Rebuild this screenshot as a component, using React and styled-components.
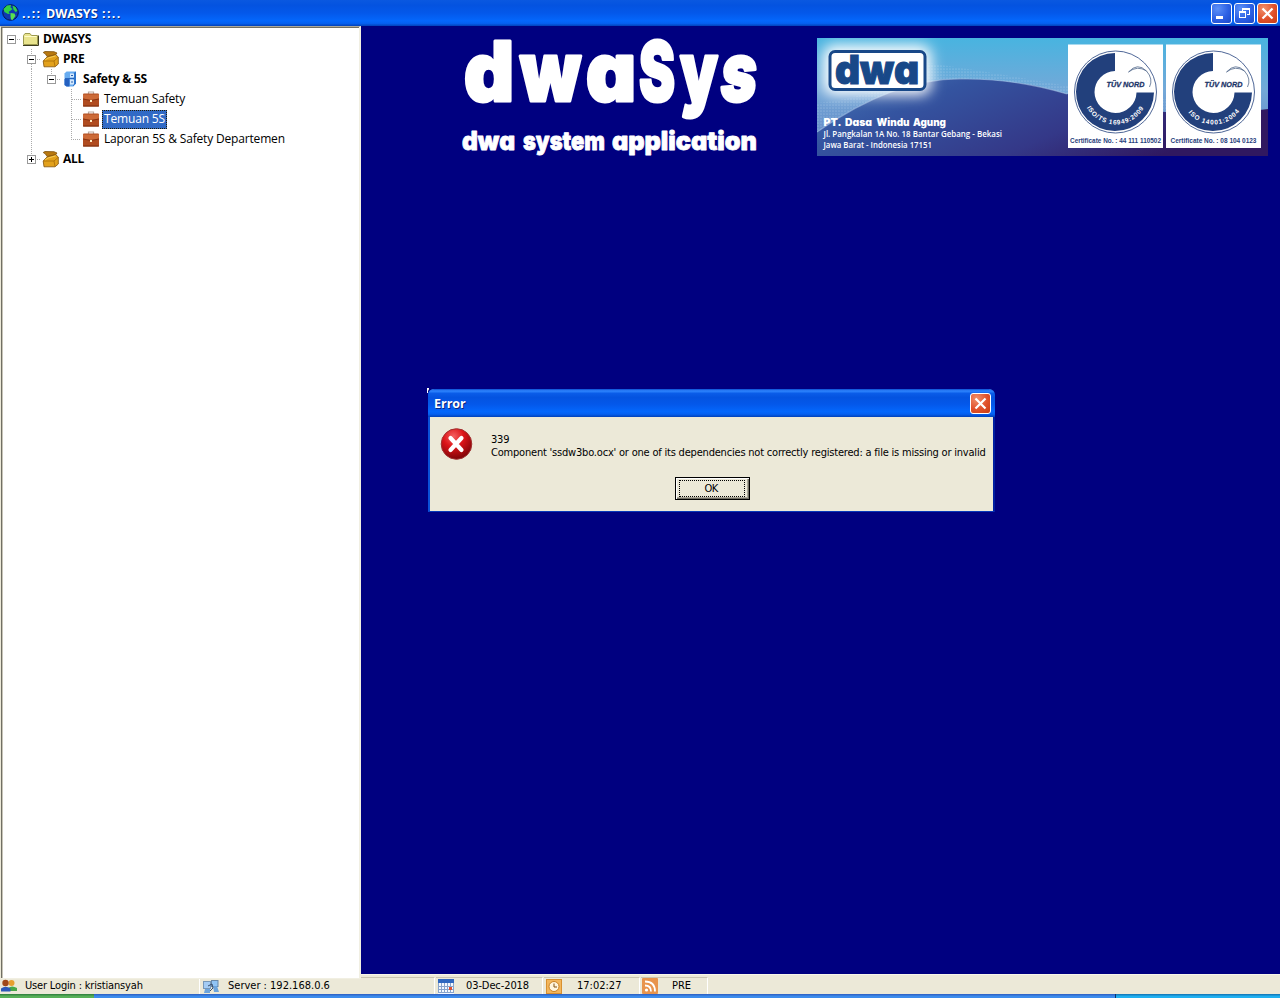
import React from 'react';
import styled, { createGlobalStyle, css } from 'styled-components';

const GlobalStyle = createGlobalStyle`
  * { box-sizing: border-box; }
  body { margin: 0; overflow: hidden; background: #000080; }
  svg { display: block; flex: none; }
`;

const tahoma = css`
  font-family: 'DejaVu Sans Condensed', 'DejaVu Sans', sans-serif;
  font-stretch: condensed;
`;
const trebuchet = css`
  font-family: 'Open Sans', 'Noto Sans', sans-serif;
`;

const Screen = styled.div`
  width: 1280px;
  height: 998px;
  display: flex;
  flex-direction: column;
  overflow: hidden;
  position: relative;
  background: #ece9d8;
`;

const TitleBar = styled.header`
  height: 26px;
  flex: none;
  display: flex;
  align-items: center;
  padding: 0 2px;
  background: linear-gradient(#0a58e0 0, #0453e0 20%, #0458ea 50%, #0467fc 80%, #0560f0 90%, #0241b8 100%);
`;

const TitleText = styled.h1`
  ${trebuchet}
  flex: 1;
  margin: 0 0 0 ${(p) => p.$indent || 4}px;
  padding-top: ${(p) => p.$drop || 0}px;
  font-size: 12.5px;
  line-height: 26px;
  font-weight: 700;
  color: #fff;
  text-shadow: 1px 1px 0 #0a2a80;
  white-space: pre;
`;

const Dots = styled.span`
  letter-spacing: 1.3px;
`;

const Controls = styled.div`
  display: flex;
  gap: 2px;
`;

const ControlButton = styled.button`
  width: 21px;
  height: 21px;
  padding: 0;
  display: flex;
  align-items: center;
  justify-content: center;
  border: 1px solid #fff;
  border-radius: 3px;
  background: ${(p) =>
    p.$close
      ? 'radial-gradient(circle at 30% 25%, #f0906c, #e0502a 55%, #c83c14)'
      : 'radial-gradient(circle at 30% 25%, #5c90f8, #2c60e4 55%, #1a48c8)'};
`;

const Workspace = styled.main`
  height: 948px;
  flex: none;
  display: grid;
  grid-template-columns: 361px 1fr;
`;

const Sidebar = styled.nav`
  position: relative;
  z-index: 1;
  height: 953px;
  padding: 2px 0 0 0;
  background: #fff;
  border-style: solid;
  border-width: 1px 2px 1px 1px;
  border-color: #aca899 #f1efe2 #f1efe2 #ece9d8;
  box-shadow: inset 1px 1px 0 #716f64, inset 2px 0 0 #c8c5b8;
`;

const TreeRow = styled.div`
  height: 20px;
  display: flex;
  align-items: center;
`;

const Guide = styled.span`
  width: 20px;
  height: 20px;
  flex: none;
`;

const NodeLabel = styled.span`
  ${trebuchet}
  height: 19px;
  line-height: 18px;
  padding: 0 2px;
  margin-left: ${(p) => (p.$bold ? 1 : 2)}px;
  white-space: nowrap;
  font-size: 12px;
  font-weight: ${(p) => (p.$bold ? 700 : 400)};
  letter-spacing: ${(p) => (p.$bold ? -0.22 : -0.17)}px;
  color: ${(p) => (p.$selected ? '#fff' : '#000')};
  background: ${(p) => (p.$selected ? '#316ac5' : 'transparent')};
  outline: ${(p) => (p.$selected ? '1px dotted #221a00' : 'none')};
  outline-offset: -1px;
`;

const Canvas = styled.section`
  background: #000080;
  display: flex;
  justify-content: space-between;
  align-items: flex-start;
  padding: 12px 12px 0 99px;
`;

const Dialog = styled.div`
  position: absolute;
  left: 428px;
  top: 389px;
  width: 567px;
  height: 123px;
  display: flex;
  flex-direction: column;
  background: #ece9d8;
  border: solid #0a50d8;
  border-width: 0 2px 1px 2px;
  border-right-color: #001ea0;
  border-bottom-color: #0838b8;
  border-radius: 6px 6px 0 0;
`;

const CornerSpeck = styled.span`
  position: absolute;
  left: -3px;
  top: -1px;
  width: 2px;
  height: 5px;
  background: #fff;
  clip-path: polygon(0 0, 100% 0, 100% 25%, 50% 60%, 50% 100%, 0 100%);
`;

const DialogTitle = styled.div`
  height: 28px;
  flex: none;
  margin: 0 -2px;
  padding: 1px 4px 0 2px;
  display: flex;
  align-items: center;
  border-radius: 6px 6px 0 0;
  background: linear-gradient(#0a4cd0 0, #2f86ff 7%, #0a5ce8 16%, #0453e0 30%, #0458ea 55%, #0467fc 80%, #0560f0 90%, #0241b8 100%);
`;

const DialogBody = styled.div`
  display: flex;
  padding: 10px 0 0 10px;
  height: 60px;
  flex: none;
`;

const Message = styled.p`
  ${tahoma}
  margin: 6px 0 0 18px;
  font-size: 11px;
  line-height: 13px;
  letter-spacing: -0.2px;
  white-space: pre;
  color: #000;
`;

const OkButton = styled.button`
  ${tahoma}
  width: 75px;
  height: 23px;
  flex: none;
  margin-left: 245px;
  padding: 2px;
  border: 1px solid #000;
  background: #ece9d8;
  box-shadow: inset 1px 1px 0 #fff, inset -1px -1px 0 #716f64, inset -2px -2px 0 #aca899;
  font-size: 11px;
  letter-spacing: -0.6px;
`;

const FocusRing = styled.span`
  display: block;
  height: 17px;
  margin: 0 2px 0 1px;
  padding-right: 2px;
  line-height: 16px;
  border: 1px dotted #000;
`;

const StatusBar = styled.footer`
  height: 20px;
  flex: none;
  display: flex;
  padding-top: 2px;
  background: #ece9d8;
  border-top: 1px solid #f8f6ea;
`;

const StatusPanel = styled.div`
  ${tahoma}
  width: ${(p) => p.$w}px;
  margin-right: 1px;
  display: flex;
  align-items: center;
  font-size: 11px;
  line-height: 16px;
  letter-spacing: ${(p) => p.$track || 0}px;
  color: #000;
  white-space: pre;
  border-top: 1px solid #c9c5b2;
  border-right: 1px solid #fff;
  padding: 0 0 0 ${(p) => p.$pad}px;
  gap: ${(p) => p.$gap}px;
`;

const StatusText = styled.span`
  margin-top: -1px;
`;

const Taskbar = styled.div`
  height: 4px;
  flex: none;
  display: flex;
`;
const TaskSegment = styled.div`
  width: ${(p) => p.$w}px;
  border-left: ${(p) => (p.$edge ? '1px solid #0a3070' : 'none')};
  background: linear-gradient(${(p) => p.$from}, ${(p) => p.$to} 60%);
`;

const Toggle = ({ plus, up, down }) => (
  <svg width="20" height="20" shapeRendering="crispEdges">
    <g stroke="#aaa" strokeDasharray="1 1">
      <path d="M15.5 10.5H20" />
      {up && <path d="M10.5 0V6" />}
      {down && <path d="M10.5 15V20" />}
    </g>
    <rect x="6.500" y="6.500" width="8" height="8" fill="#fff" stroke="#999" />
    <path d="M8 10.500h5" stroke="#000" />
    {plus && <path d="M10.500 8v5" stroke="#000" />}
  </svg>
);

const Line = ({ shape }) => (
  <svg width="20" height="20" shapeRendering="crispEdges">
    <g stroke="#aaa" strokeDasharray="1 1" fill="none">
      {shape === 'v' && <path d="M10.5 0V20" />}
      {shape === 'tee' && <path d="M10.5 0V20M10.5 10.5H20" />}
      {shape === 'end' && <path d="M10.5 0V10.5H20" />}
    </g>
  </svg>
);

const Folder = () => (
  <svg width="19" height="17" viewBox="-1 0 19 17">
    <path d="M1.500 4.500 3 2.500h5L9.500 4.500h6v9h-14z" fill="#e9e48e" stroke="#9c9a50" />
    <path d="M2.500 5.500h12" stroke="#fffcc8" />
    <path d="M1 14.500h15.500V4.500" fill="none" stroke="#3c3c20" />
  </svg>
);

const Box = () => (
  <svg width="19" height="18" viewBox="-1 0 19 18">
    <path d="M1.200 2.500 3 1.500l9 .2 3 1.300L13.500 5 5 6.500 3.500 4z" fill="#b87810" stroke="#80500a" strokeWidth=".8" />
    <path d="M5 7 13.500 4.500l2.800 2.500v7L13 16.800H2L1.200 11z" fill="#e2a11c" stroke="#80500a" strokeWidth=".8" />
    <path d="M1.500 11h10.500l4-3.500M12 11l1 5.500" fill="none" stroke="#a86c08" strokeWidth=".8" />
    <path d="M3 10 6 8l7.500-2" stroke="#f8cc58" fill="none" />
  </svg>
);

const Cabinet = () => (
  <svg width="19" height="18" viewBox="-1 0 19 18">
    <path d="M2.500 3.500 4.500 1.500h9.500v12L11 16.500H4.500L2.500 15z" fill="#68acf0" />
    <path d="M2.500 9h5v7.500h-3L2.500 15z" fill="#2460c0" />
    <path d="M11.500 3l2.500-1.500v12L11 16.500z" fill="#2c74cc" />
    <path d="M8 3.500h4v4H8zM8 9.500h4v5H8z" fill="#d4e8fc" />
    <path d="M9 5.500h2M9 12h2" stroke="#2860b0" />
    <path d="M3 8.500h9" stroke="#1a54b0" strokeWidth=".8" />
  </svg>
);

const Briefcase = () => (
  <svg width="19" height="18" viewBox="-1 0 19 18">
    <path d="M6.500 4V2h5v2" fill="none" stroke="#b8a8a0" strokeWidth="1.200" />
    <rect x="1" y="3.500" width="16" height="13" rx="1" fill="#b04c20" />
    <path d="M1 4.500h16v4L9 10 1 8.500z" fill="#cc6a38" />
    <path d="M1 9l8 1.500L17 9" fill="none" stroke="#7c2c0c" strokeWidth=".8" />
    <path d="M1 16h16" stroke="#7c2c0c" />
    <rect x="8" y="10" width="2" height="2" fill="#fff0c8" />
  </svg>
);

const Globe = () => (
  <svg width="17" height="18" viewBox="0 0 17 18">
    <circle cx="8.500" cy="8.500" r="7.800" fill="#1038b0" stroke="#061450" />
    <path d="M1.500 5 5 1.500l4-.5-.5 2.500 2 1.500-2.500 2L6.500 8 8 9.500 6 10 2.500 8z" fill="#30d048" />
    <path d="M10.500 1.500l3 1.500 2 4-2 1-2-2.500z" fill="#30d048" />
    <path d="M8.500 9l4 .5 1 2.500-3 4-1.500-.5-.5-3z" fill="#58e050" />
  </svg>
);

const CloseGlyph = () => (
  <svg width="13" height="13" viewBox="0 0 13 13">
    <path d="M1.500 1.500l10 10M11.500 1.500l-10 10" stroke="#fff" strokeWidth="2.200" />
  </svg>
);
const MinimizeGlyph = () => (
  <svg width="15" height="15" viewBox="0 0 15 15">
    <path d="M2 11.500h7" stroke="#fff" strokeWidth="3" />
  </svg>
);
const RestoreGlyph = () => (
  <svg width="15" height="15" viewBox="0 0 15 15" fill="none" stroke="#fff" shapeRendering="crispEdges">
    <path d="M5.500 5V2.500h7v6H10M5 3.500h8" />
    <path d="M2.500 5.500h6v6h-6zM2 6.500h7" />
  </svg>
);

const ErrorIcon = () => (
  <svg width="33" height="34" viewBox="0 0 33 34">
    <defs>
      <radialGradient id="red" cx="40%" cy="25%" r="75%">
        <stop offset="0" stopColor="#f46060" />
        <stop offset=".45" stopColor="#dc1418" />
        <stop offset="1" stopColor="#800408" />
      </radialGradient>
    </defs>
    <circle cx="16.500" cy="17" r="15.300" fill="url(#red)" stroke="#a03030" />
    <path d="M10.500 11l11 12M21.500 11L10.500 23" stroke="#fff" strokeWidth="4.200" strokeLinecap="round" />
  </svg>
);

const Users = () => (
  <svg width="16" height="14" viewBox="0 0 16 14">
    <circle cx="10.500" cy="4" r="3" fill="#e8a030" />
    <path d="M7 12V9q4-3 9 0v3z" fill="#48a848" />
    <circle cx="4.500" cy="4" r="3.200" fill="#a04818" />
    <path d="M0 12.500V9.500q4.500-3.500 9.500 0v3z" fill="#2c58b8" />
  </svg>
);
const Network = () => (
  <svg width="16" height="14" viewBox="0 0 16 14">
    <rect x=".5" y="2.500" width="7" height="7" fill="#a4ccf4" stroke="#7898b8" />
    <rect x="8.500" y="1.500" width="6.500" height="6" fill="#90c4f4" stroke="#6888a8" />
    <path d="M2 10h5v4H1zM10 7h4l2 6h-5z" fill="#6ca4dc" />
    <path d="M5 7l4-2 1 4-3 3" stroke="#384c68" fill="none" />
  </svg>
);
const Calendar = () => (
  <svg width="16" height="15" viewBox="0 0 16 15" shapeRendering="crispEdges">
    <rect width="16" height="15" fill="#f4f8ff" />
    <rect width="16" height="4" fill="#3068c0" />
    <path d="M0 7.500h15M0 10.500h15M0 13.500h15M.5 4v10M3.500 4v10M6.500 4v10M9.500 4v10M12.500 4v10M15.500 4v10" stroke="#88a4cc" />
    <rect x="11" y="8" width="3" height="3" fill="#e05030" />
  </svg>
);
const Clock = () => (
  <svg width="16" height="15" viewBox="0 0 16 15">
    <rect x=".5" y=".5" width="15" height="14" fill="#f3b65c" stroke="#d89030" />
    <circle cx="8" cy="7.500" r="5" fill="#fff4dc" stroke="#c88020" />
    <path d="M8 4.500v3.500h3" fill="none" stroke="#805010" />
  </svg>
);
const Feed = () => (
  <svg width="16" height="16" viewBox="0 0 16 16">
    <rect width="16" height="16" rx="1" fill="#e8944c" />
    <circle cx="4.500" cy="12" r="1.600" fill="#fff" />
    <path d="M3 7.500q6 0 6 6M3 3.500q10 0 10 10" fill="none" stroke="#fff" strokeWidth="1.800" />
  </svg>
);

const Fit = ({ x, w, italic, children }) => (
  <tspan x={x} textLength={w} lengthAdjust="spacingAndGlyphs" fontStyle={italic ? 'italic' : 'normal'}>
    {children}
  </tspan>
);

const BrandArt = styled.svg`
  overflow: visible;
  font-family: Inter, sans-serif;
  font-weight: 900;
  font-feature-settings: 'cv11';
`;

const Brand = () => (
  <BrandArt width="304" height="124" viewBox="0 0 304 124" fill="#fff" stroke="#fff" strokeLinejoin="round">
    <text y="63" fontSize="82" strokeWidth="3">
      <Fit x={4} w={50}>d</Fit>
      <Fit x={60} w={61}>w</Fit>
      <Fit x={126} w={50}>a</Fit>
      <Fit x={179} w={36}>S</Fit>
      <Fit x={220} w={38}>y</Fit>
      <Fit x={261} w={36} italic>s</Fit>
    </text>
    <text y="112" fontSize="25.500" strokeWidth=".8">
      <Fit x={2} w={53}>dwa</Fit>
      <Fit x={63} w={82}>system</Fit>
      <Fit x={152} w={145}>application</Fit>
    </text>
  </BrandArt>
);

const Seal = ({ id, x, standard, arc, start, certificate, certX, certLen }) => (
  <g transform={`translate(${x} 54)`}>
    <rect x="-47.500" y="-47.500" width="95" height="103.500" fill="#fff" />
    <circle r="41" fill="none" stroke="#22407c" strokeWidth=".8" />
    <path d="M-.5 -39A39 39 0 1 0 38.500 .5H21A21 21 0 1 1 -.5 -21Z" fill="#22407c" />
    <path d="M13-20Q22-30 31-21 38-13 34-5M13-20q9-7 18-1" fill="none" stroke="#52688c" strokeWidth=".8" />
    <text x="-9" y="-5" fontSize="8" fontWeight="700" fontStyle="italic" textLength="38" lengthAdjust="spacingAndGlyphs" fill="#1c3468" stroke="#1c3468" strokeWidth=".3">TÜV NORD</text>
    <path id={id} d="M-32.500 0A32.500 32.500 0 0 0 32.500 0" fill="none" />
    <text fontSize="6.500" fontWeight="700" fill="#fff">
      <textPath href={`#${id}`} startOffset={start} textLength={arc}>{standard}</textPath>
    </text>
    <text x={certX} y="50.500" fontSize="6.500" fontWeight="700" fill="#28407c" textLength={certLen} lengthAdjust="spacingAndGlyphs">{certificate}</text>
  </g>
);

const Banner = () => (
  <svg width="451" height="118" viewBox="0 0 451 118" fontFamily="'Liberation Sans', sans-serif">
    <defs>
      <linearGradient id="sky" x1="0" y1="0" x2="0" y2="1">
        <stop offset="0" stopColor="#48b4e0" />
        <stop offset=".45" stopColor="#74a8d8" />
        <stop offset="1" stopColor="#6080c0" />
      </linearGradient>
      <linearGradient id="hill" x1="0" y1="0" x2="1" y2=".4">
        <stop offset="0" stopColor="#4878b8" />
        <stop offset=".3" stopColor="#3454a0" />
        <stop offset=".7" stopColor="#343888" />
        <stop offset="1" stopColor="#301860" />
      </linearGradient>
      <filter id="soft" x="-30%" y="-50%" width="160%" height="200%">
        <feGaussianBlur stdDeviation="7" />
      </filter>
      <pattern id="dots" width="3" height="3" patternUnits="userSpaceOnUse">
        <circle cx="1" cy="1" r=".6" fill="#d4e8f8" />
      </pattern>
    </defs>
    <rect width="451" height="118" fill="url(#sky)" />
    <path d="M0 65Q60 60 110 25 150 30 250 48L451 75V95L250 58Q100 20 0 100z" fill="url(#dots)" opacity=".5" />
    <path d="M0 94Q80 38 150 41 200 41 250 56 350 85 451 71V118H0z" fill="url(#hill)" />
    <path d="M0 94Q80 38 150 41 200 41 250 56" fill="none" stroke="#b8d4f0" strokeWidth="1.200" opacity=".5" />
    <rect x="6" y="7" width="108" height="50" rx="10" fill="#fff" filter="url(#soft)" />
    <rect x="13" y="13.500" width="95" height="38" rx="5" fill="#fff" stroke="#184888" strokeWidth="3" />
    <text x="18" y="46" fontFamily="Inter, sans-serif" fontWeight="900" fontSize="40" textLength="84" lengthAdjust="spacingAndGlyphs" fill="#184888" stroke="#184888" style={{ fontFeatureSettings: "'cv11'" }}>dwa</text>
    <g fill="#fff">
      <text x="6.500" y="88" fontFamily="Inter, sans-serif" fontWeight="900" fontSize="10.500" style={{ fontFeatureSettings: "'cv11'" }}>
        <Fit x={6.500} w={18}>PT.</Fit>
        <Fit x={28} w={27}>Dasa</Fit>
        <Fit x={59.500} w={33}>Windu</Fit>
        <Fit x={96} w={33}>Agung</Fit>
      </text>
      <g fontFamily="'Open Sans', sans-serif" fontSize="8.500" fontWeight="600">
        <text x="6.500" y="99" textLength="178.500" lengthAdjust="spacingAndGlyphs">Jl. Pangkalan 1A No. 18 Bantar Gebang - Bekasi</text>
        <text x="6.500" y="110" textLength="108.500" lengthAdjust="spacingAndGlyphs">Jawa Barat - Indonesia 17151</text>
      </g>
    </g>
    <Seal id="seal-ts" x={298.5} standard="ISO/TS 16949:2009" start={16} arc={69} certificate="Certificate No. : 44 111 110502" certX={-45.5} certLen={91} />
    <Seal id="seal-iso" x={396.500} standard="ISO 14001:2004" start={22} arc={59} certificate="Certificate No. : 08 104 0123" certX={-43} certLen={86} />
  </svg>
);

export default function App() {
  return (
    <Screen>
      <GlobalStyle />
      <TitleBar>
        <Globe />
        <TitleText $indent={3} $drop={1}><Dots>..:: </Dots>DWASYS<Dots> ::..</Dots></TitleText>
        <Controls>
          <ControlButton><MinimizeGlyph /></ControlButton>
          <ControlButton><RestoreGlyph /></ControlButton>
          <ControlButton $close><CloseGlyph /></ControlButton>
        </Controls>
      </TitleBar>
      <Workspace>
        <Sidebar>
          <TreeRow>
            <Toggle /><Folder /><NodeLabel $bold>DWASYS</NodeLabel>
          </TreeRow>
          <TreeRow>
            <Guide /><Toggle up down /><Box /><NodeLabel $bold>PRE</NodeLabel>
          </TreeRow>
          <TreeRow>
            <Guide /><Line shape="v" /><Toggle up /><Cabinet /><NodeLabel $bold>Safety &amp; 5S</NodeLabel>
          </TreeRow>
          <TreeRow>
            <Guide /><Line shape="v" /><Guide /><Line shape="tee" /><Briefcase /><NodeLabel>Temuan Safety</NodeLabel>
          </TreeRow>
          <TreeRow>
            <Guide /><Line shape="v" /><Guide /><Line shape="tee" /><Briefcase /><NodeLabel $selected>Temuan 5S</NodeLabel>
          </TreeRow>
          <TreeRow>
            <Guide /><Line shape="v" /><Guide /><Line shape="end" /><Briefcase /><NodeLabel>Laporan 5S &amp; Safety Departemen</NodeLabel>
          </TreeRow>
          <TreeRow>
            <Guide /><Toggle plus up /><Box /><NodeLabel $bold>ALL</NodeLabel>
          </TreeRow>
        </Sidebar>
        <Canvas>
          <Brand />
          <Banner />
        </Canvas>
      </Workspace>
      <StatusBar>
        <StatusPanel $w={200} $pad={1} $gap={8} $track={-0.17}><Users /><StatusText>User Login : kristiansyah</StatusText></StatusPanel>
        <StatusPanel $w={234} $pad={2} $gap={9}><Network /><StatusText>Server : 192.168.0.6</StatusText></StatusPanel>
        <StatusPanel $w={107} $pad={2} $gap={12} $track={-0.1}><Calendar /><StatusText>03-Dec-2018</StatusText></StatusPanel>
        <StatusPanel $w={96} $pad={2} $gap={15}><Clock /><StatusText>17:02:27</StatusText></StatusPanel>
        <StatusPanel $w={67} $pad={1} $gap={14}><Feed /><StatusText>PRE</StatusText></StatusPanel>
      </StatusBar>
      <Taskbar>
        <TaskSegment $w={94} $from="#2c7c3c" $to="#58b058" />
        <TaskSegment $w={1021} $from="#2c5cc0" $to="#3c8cec" />
        <TaskSegment $w={165} $edge $from="#1070b0" $to="#20b0f0" />
      </Taskbar>
      <Dialog>
        <DialogTitle>
          <TitleText $drop={1}>Error</TitleText>
          <ControlButton $close><CloseGlyph /></ControlButton>
        </DialogTitle>
        <DialogBody>
          <ErrorIcon />
          <Message>{"339\nComponent 'ssdw3bo.ocx' or one of its dependencies not correctly registered: a file is missing or invalid"}</Message>
        </DialogBody>
        <OkButton><FocusRing>OK</FocusRing></OkButton>
        <CornerSpeck />
      </Dialog>
    </Screen>
  );
}
